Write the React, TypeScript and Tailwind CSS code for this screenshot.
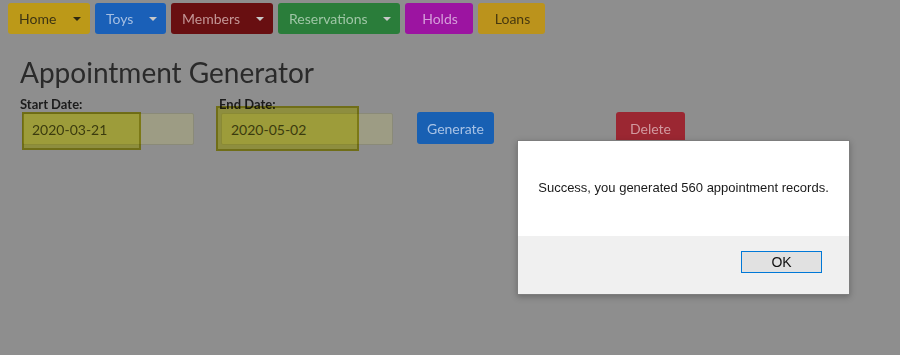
import React from 'react';

type NavItem = { label: string; bg: string; text: string; caret?: boolean; w: string };

const nav: NavItem[] = [
  { label: 'Home', bg: 'bg-[#bc9918]', text: 'text-[#3d3414]', caret: true, w: 'w-[82px]' },
  { label: 'Toys', bg: 'bg-[#1a60b8]', text: 'text-[#a6bfe2]', caret: true, w: 'w-[71px]' },
  { label: 'Members', bg: 'bg-[#680f11]', text: 'text-[#c39696]', caret: true, w: 'w-[102px]' },
  { label: 'Reservations', bg: 'bg-[#2a7d3a]', text: 'text-[#9fc6a6]', caret: true, w: 'w-[122px]' },
  { label: 'Holds', bg: 'bg-[#9c14a1]', text: 'text-[#d59fda]', w: 'w-[68px]' },
  { label: 'Loans', bg: 'bg-[#bb931c]', text: 'text-[#47380f]', w: 'w-[67px]' },
];

const Caret = ({ color }: { color: string }) => (
  <span className={`inline-block w-0 h-0 border-l-[4px] border-r-[4px] border-t-[4px] border-l-transparent border-r-transparent ${color}`} />
);

const DateField = ({
  label,
  value,
  hl,
}: {
  label: string;
  value: string;
  hl: string;
}) => (
  <div className="flex flex-col">
    <label className="text-[13px] font-bold text-[#1c1c1c] leading-[16px] h-[16px]">{label}</label>
    <div className="relative mt-[1px] ml-[2px]">
      <div className="w-[172px] h-[32px] border border-[#8a8a78] bg-[#9d9c84] rounded-[2px] flex items-center pl-[9px] text-[14px] text-[#3b3b1e]">
        {value}
      </div>
      {/* yellow annotation box drawn over the field */}
      <div className={`absolute border-2 border-[#c9c62a] bg-[#ffff70] mix-blend-multiply ${hl}`} />
    </div>
  </div>
);

export default function App() {
  return (
    <div className="relative w-[900px] h-[355px] bg-[#8e8e8e] overflow-hidden font-['Lato',sans-serif]">
      <div className="flex gap-[5px] pl-2 pt-[3px]">
        {nav.map((n) => (
          <div
            key={n.label}
            className={`${n.bg} ${n.text} ${n.w} h-[31px] rounded-[3px] flex items-center justify-between pl-[11px] pr-[9px] text-[14px] ${n.caret ? '' : 'justify-center px-0'}`}
          >
            <span>{n.label}</span>
            {n.caret && <Caret color={n.label === 'Home' ? 'border-t-[#2e2810]' : 'border-t-[#c8c8c8]'} />}
          </div>
        ))}
      </div>

      <div className="pl-5 pt-[21px]">
        <h1 className="text-[28px] leading-[34px] text-[#2a2a2a]">Appointment Generator</h1>
        <div className="flex items-start mt-[7px]">
          <DateField label="Start Date:" value="2020-03-21" hl="left-[0px] top-[-1px] w-[119px] h-[38px]" />
          <div className="ml-[25px]">
            <DateField label="End Date:" value="2020-05-02" hl="left-[-5px] top-[-7px] w-[143px] h-[45px]" />
          </div>
          <button className="ml-[24px] mt-[16px] w-[77px] h-[32px] rounded-[3px] bg-[#1860b3] text-[#a8c2e5] text-[14px]">
            Generate
          </button>
          <button className="ml-[122px] mt-[16px] w-[69px] h-[32px] rounded-[3px] bg-[#9b2732] text-[#d19aa0] text-[14px]">
            Delete
          </button>
        </div>
      </div>

      <div className="absolute left-[517px] top-[140px] w-[333px] h-[155px] bg-white border border-[#7d7d7d] shadow-[0_2px_6px_rgba(0,0,0,0.25)] flex flex-col font-['Liberation_Sans',Arial,sans-serif]">
        <div className="flex-1 flex items-center justify-center text-[13px] text-[#1a1a1a] pb-[2px]">
          Success, you generated 560 appointment records.
        </div>
        <div className="h-[58px] bg-[#f0f0f0] flex justify-end items-start pt-[15px] pr-[27px]">
          <button className="w-[81px] h-[22px] bg-[#e1e1e1] border border-[#0078d7] text-[14px] text-[#111] flex items-center justify-center">
            OK
          </button>
        </div>
      </div>
    </div>
  );
}
